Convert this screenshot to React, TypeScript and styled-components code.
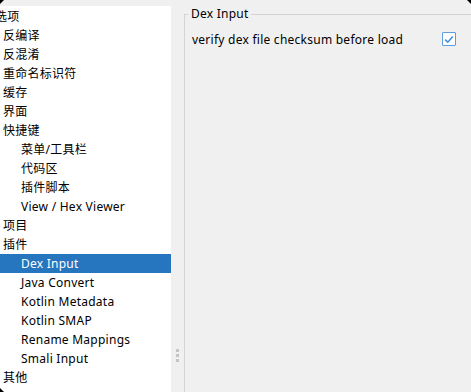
import React from "react"
import styled, { createGlobalStyle } from "styled-components"

type TreeItem = {
  label: string;
  level: number;
  selected?: boolean;
}

const items: TreeItem[] = [
  { label: "选项", level: 0 },
  { label: "反编译", level: 1 },
  { label: "反混淆", level: 1 },
  { label: "重命名标识符", level: 1 },
  { label: "缓存", level: 1 },
  { label: "界面", level: 1 },
  { label: "快捷键", level: 1 },
  { label: "菜单/工具栏", level: 2 },
  { label: "代码区", level: 2 },
  { label: "插件脚本", level: 2 },
  { label: "View / Hex Viewer", level: 2 },
  { label: "项目", level: 1 },
  { label: "插件", level: 1 },
  { label: "Dex Input", level: 2, selected: true },
  { label: "Java Convert", level: 2 },
  { label: "Kotlin Metadata", level: 2 },
  { label: "Kotlin SMAP", level: 2 },
  { label: "Rename Mappings", level: 2 },
  { label: "Smali Input", level: 2 },
  { label: "其他", level: 1 },
]

const GlobalStyle = createGlobalStyle`
  html, body {
    margin: 0;
    padding: 0;
    background: #f0f0f0;
    overflow: hidden;
  }
  body {
    font-family: "Noto Sans", "Noto Sans CJK SC", sans-serif;
    font-size: 12px;
    letter-spacing: 0.25px;
    color: #000;
  }
`

const Window = styled.div`
  position: relative;
  display: flex;
  width: 471px;
  height: 392px;
  overflow: hidden;
  background: #f0f0f0;
`

const Tree = styled.ul`
  list-style: none;
  margin: 6px 0 0 0;
  padding: 1px 0 0 0;
  width: 171px;
  background: #fff;
  overflow: hidden;
`

const indent = [0, 3, 21]

const Row = styled.li<{ $level: number; $selected?: boolean }>`
  height: 19px;
  line-height: 19px;
  padding-left: ${(p) => indent[p.$level]}px;
  text-indent: ${(p) => (p.$level === 0 ? "-5px" : "0")};
  white-space: nowrap;
  background: ${(p) => (p.$selected ? "#2675bf" : "transparent")};
  color: ${(p) => (p.$selected ? "#fff" : "#000")};
`

const Splitter = styled.div`
  width: 13px;
  display: flex;
  flex-direction: column;
  align-items: center;
  justify-content: flex-end;
  gap: 2px;
  padding-bottom: 30px;
  box-sizing: border-box;
`

const Dot = styled.span`
  width: 3px;
  height: 3px;
  background: #c4c4c4;
`

const Content = styled.div`
  flex: 1;
  padding-top: 7px;
`

const Group = styled.fieldset`
  margin: 0;
  padding: 8px 0 0 7px;
  height: 100%;
  box-sizing: border-box;
  border: none;
  border-top: 1px solid #d4d4d4;
  border-left: 1px solid #d4d4d4;
  min-width: 0;
`

const Legend = styled.legend`
  margin-left: -4px;
  padding: 0 2px 0 3px;
  line-height: 14px;
`

const OptionRow = styled.label`
  display: flex;
  align-items: center;
  justify-content: space-between;
  padding-right: 15px;
  height: 20px;
`

const Check = styled.span`
  display: flex;
  align-items: center;
  justify-content: center;
  width: 12px;
  height: 12px;
  border: 1px solid #5b9ee6;
  border-radius: 1px;
  background: #fff;
`

const Corner = styled.span<{ $pos: "tl" | "bl" | "tr" }>`
  position: absolute;
  width: 0;
  height: 0;
  ${(p) =>
    p.$pos === "tl"
      ? "top: 0; left: 0; border-top: 4px solid #000; border-right: 4px solid transparent;"
      : p.$pos === "bl"
      ? "bottom: 0; left: 0; border-bottom: 4px solid #000; border-right: 4px solid transparent;"
      : "top: 0; right: 0; border-top: 4px solid #000; border-left: 4px solid transparent;"}
`

const App: React.FC = () => (
  <Window>
    <GlobalStyle />
    <Tree>
      {items.map((item) => (
        <Row key={item.label} $level={item.level} $selected={item.selected}>
          {item.label}
        </Row>
      ))}
    </Tree>
    <Splitter>
      <Dot />
      <Dot />
      <Dot />
    </Splitter>
    <Content>
      <Group>
        <Legend>Dex Input</Legend>
        <OptionRow>
          <span>verify dex file checksum before load</span>
          <Check>
            <svg width="10" height="9" viewBox="0 0 10 9">
              <path d="M1.2 4.6 L3.8 7.2 L8.8 1.4" fill="none" stroke="#3f8fe0" strokeWidth="1.6" />
            </svg>
          </Check>
        </OptionRow>
      </Group>
    </Content>
    <Corner $pos="tl" />
    <Corner $pos="bl" />
    <Corner $pos="tr" />
  </Window>
)

export default App
